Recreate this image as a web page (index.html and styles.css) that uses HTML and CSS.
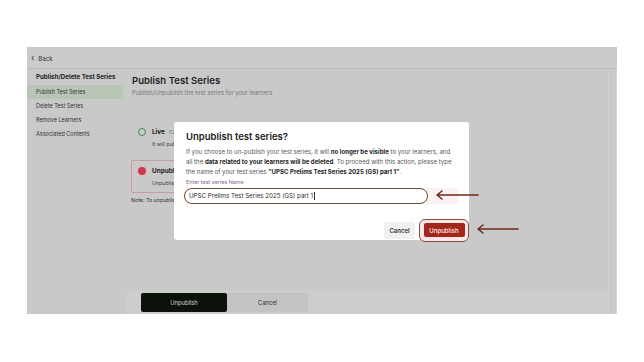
FILE: index.html
```html
<!DOCTYPE html>
<html>
<head>
<meta charset="utf-8">
<link rel="stylesheet" href="styles.css">
</head>
<body>
<div class="frame">
  <div class="topbar"><span class="chev">&#8249;</span> Back</div>
  <div class="layout">
    <aside class="sidebar">
      <div class="side-head">Publish/Delete Test Series</div>
      <div class="side-item active">Publish Test Series</div>
      <div class="side-item">Delete Test Series</div>
      <div class="side-item">Remove Learners</div>
      <div class="side-item">Associated Contents</div>
    </aside>
    <main class="main">
      <div class="content">
        <h1 class="title">Publish Test Series</h1>
        <p class="subtitle">Publish/Unpublish the test series for your learners</p>
        <div class="option">
          <div class="opt-row"><span class="radio radio-live"></span><span class="opt-title">Live</span><span class="badge">Currently live</span></div>
          <div class="opt-desc">It will publish your test series for all learners</div>
        </div>
        <div class="option selected">
          <div class="opt-row"><span class="radio radio-on"></span><span class="opt-title">Unpublish</span></div>
          <div class="opt-desc">Unpublish your test series from learners</div>
        </div>
        <p class="note">Note: To unpublish the test series, type its name</p>
      </div>
      <div class="footer">
        <button class="btn-dark">Unpublish</button>
        <button class="btn-light">Cancel</button>
      </div>
    </main>
    <div class="scroll"></div>
  </div>

  <div class="modal">
    <h2 class="m-title">Unpublish test series?</h2>
    <p class="m-text">If you choose to un-publish your test series, it will <b>no longer be visible</b> to your learners, and all the <b>data related to your learners will be deleted</b>. To proceed with this action, please type the name of your test series <b>"UPSC Prelims Test Series 2025 (GS) part 1"</b>.</p>
    <div class="m-label">Enter test series Name</div>
    <div class="input-wrap">
      <div class="input-ring">UPSC Prelims Test Series 2025 (GS) part 1<span class="caret"></span></div>
    </div>
    <div class="m-actions">
      <button class="m-cancel">Cancel</button>
      <span class="ring-wrap"><button class="m-unpub">Unpublish</button></span>
    </div>
  </div>

  <svg class="arrow arrow-1" width="44" height="10" viewBox="0 0 44 10">
    <path d="M43 5 H2 M7 1 L2 5 L7 9" fill="none" stroke="#6e2a1c" stroke-width="1.6" stroke-linecap="round" stroke-linejoin="round"/>
  </svg>
  <svg class="arrow arrow-2" width="44" height="10" viewBox="0 0 44 10">
    <path d="M42 5 H2 M7 1 L2 5 L7 9" fill="none" stroke="#6e2a1c" stroke-width="1.6" stroke-linecap="round" stroke-linejoin="round"/>
  </svg>
</div>
</body>
</html>
```

FILE: styles.css
```css
* { box-sizing: border-box; }
html, body { margin: 0; padding: 0; background: #ffffff; }
body {
  font-family: Inter, "Liberation Sans", sans-serif;
  color: #222;
  width: 644px;
  height: 362px;
  overflow: hidden;
}
.frame {
  position: relative;
  margin: 47px 0 0 27px;
  width: 590px;
  height: 267px;
  background: #c9c9c9;
  display: flex;
  flex-direction: column;
}
.topbar {
  height: 22px;
  border-bottom: 1px solid #bcbcbc;
  background: #cbcbcb;
  font-size: 6.2px;
  line-height: 21px;
  padding-left: 4px;
  color: #333;
}
.chev { font-size: 9px; margin-right: 2px; }
.layout { flex: 1; display: flex; min-height: 0; }
.sidebar { width: 96px; padding-top: 4px; }
.side-head {
  font-size: 6.2px;
  font-weight: 700;
  line-height: 8px;
  padding-left: 9px;
  margin-bottom: 4px;
  color: #222;
}
.side-item {
  height: 14px;
  line-height: 14px;
  font-size: 5.5px;
  padding-left: 9px;
  color: #333;
}
.side-item.active { background: #b8c5b5; }
.main {
  flex: 1;
  display: flex;
  flex-direction: column;
  padding-left: 4px;
}
.content { flex: 1; padding: 6px 0 0 5px; }
.title {
  margin: 0;
  font-size: 9.6px;
  line-height: 12px;
  font-weight: 600;
  color: #1e1e1e;
}
.subtitle {
  margin: 2px 0 0;
  font-size: 5.95px;
  line-height: 8px;
  color: #777;
}
.option {
  width: 250px;
  border: 1px solid transparent;
  padding: 6px 6px 5px 6px;
  margin-left: -1px;
  border-radius: 2px;
}
.subtitle + .option { margin-top: 24px; }
.option.selected { margin-top: 6px; border-color: #c89ea4; }
.opt-row { display: flex; align-items: center; height: 8px; }
.radio {
  width: 8px; height: 8px; border-radius: 50%;
  margin-right: 6px; flex: none;
}
.radio-live { border: 1.3px solid #3f8a50; }
.radio-on { background: #c43a4e; box-shadow: 0 0 0 1.5px #e6b9bf; }
.opt-title { font-size: 6.4px; font-weight: 700; color: #222; }
.badge { font-size: 5.4px; color: #3f8a50; margin-left: 4px; }
.opt-desc {
  margin-top: 4px; padding-left: 14px;
  font-size: 5.3px; line-height: 8px; color: #444;
}
.note {
  margin: 3px 0 0; font-size: 5.3px; line-height: 8px; color: #333;
  margin-left: -1px;
}
.footer {
  height: 24px;
  background: #cdcdcd;
  padding: 3px 0 0 14px;
  display: flex;
}
.footer button {
  border: none; font-family: inherit; font-size: 5.8px; height: 19px; padding: 0;
}
.btn-dark { width: 86px; background: #0b120a; color: #cfd3ce; border-radius: 2px; }
.btn-light { width: 81px; background: #c3c3c3; color: #333; }
.scroll { width: 9px; border-left: 1px solid #d2d2d2; border-right: 1px solid #d6d6d6; background: #c9c9c9; }

.modal {
  position: absolute;
  left: 147px; top: 75px;
  width: 295px; height: 118px;
  background: #fff;
  border-radius: 3px;
  padding: 9px 11px 0 12px;
}
.m-title {
  margin: 0; font-size: 9.5px; line-height: 12px; font-weight: 600; color: #1b1b1b;
}
.m-text {
  margin: 4px 0 0; font-size: 6.1px; line-height: 9.8px; color: #555;
}
.m-text b { color: #222; font-weight: 700; }
.m-label {
  margin-top: 3px; font-size: 5.4px; line-height: 7px; color: #8a6a8c;
}
.input-wrap {
  margin-top: 1.5px; margin-left: -2px;
  width: 274px; height: 16px;
  background: #fbf1f3; border-radius: 3px;
}
.input-ring {
  width: 244px; height: 16px;
  border: 1.5px solid #6d4a2c; border-radius: 8px;
  background: #fff;
  font-size: 6.2px; line-height: 13px; padding-left: 4px; color: #2a2a2a;
  display: flex; align-items: center;
}
.caret { display: inline-block; width: 1px; height: 8px; background: #333; margin-left: 1px; }
.m-actions {
  margin-top: 15px;
  display: flex; justify-content: flex-end; align-items: center;
  margin-right: -11px;
}
.m-cancel {
  width: 31px; height: 17px; border: none; border-radius: 2px;
  background: #f1f1f1; color: #333; font-family: inherit; font-size: 6px; font-weight: 600; padding: 0;
}
.ring-wrap {
  margin-left: 4px;
  padding: 3.5px 3.5px;
  border: 1.2px solid #8a4a3a;
  border-radius: 6px;
  background: #fbe6ea;
  display: flex;
}
.m-unpub {
  width: 41px; height: 14px; border: none; border-radius: 2px;
  background: #a3261b; color: #fbd9d6; font-family: inherit; font-size: 6px; font-weight: 600; padding: 0;
}
.arrow { position: absolute; }
.arrow-1 { left: 408px; top: 143px; }
.arrow-2 { left: 449px; top: 177px; }
```
